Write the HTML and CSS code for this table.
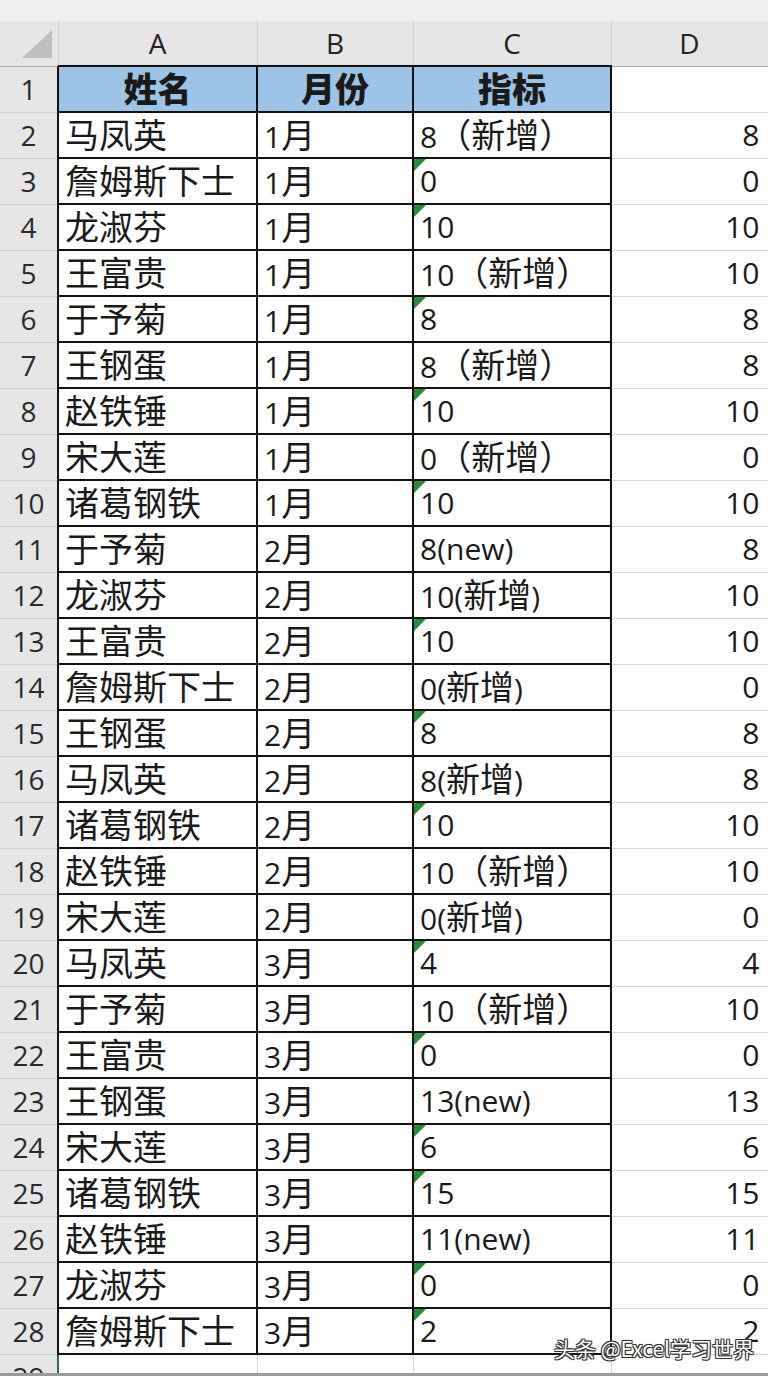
FILE: index.html
```html
<!DOCTYPE html>
<html lang="zh-CN">
<head>
<meta charset="utf-8">
<link rel="stylesheet" href="styles.css">
</head>
<body>
<div class="sheet">
  <div class="topstrip"></div>
  <table class="grid">
    <colgroup>
      <col class="c-rh"><col class="c-a"><col class="c-b"><col class="c-c"><col class="c-d">
    </colgroup>
    <tr class="colhead">
      <th class="corner"><span class="tri"></span></th>
      <th>A</th><th>B</th><th>C</th><th>D</th>
    </tr>
    <tr><td class="rh">1</td><td class="t hd"><span class="zh">姓名</span></td><td class="t hd"><span class="zh">月份</span></td><td class="t hd"><span class="zh">指标</span></td><td class="d"></td></tr>
    <tr><td class="rh">2</td><td class="t"><span class="zh">马凤英</span></td><td class="t">1<span class="zh">月</span></td><td class="t">8<span class="zh">（新增）</span></td><td class="d">8</td></tr>
    <tr><td class="rh">3</td><td class="t"><span class="zh">詹姆斯下士</span></td><td class="t">1<span class="zh">月</span></td><td class="t err">0</td><td class="d">0</td></tr>
    <tr><td class="rh">4</td><td class="t"><span class="zh">龙淑芬</span></td><td class="t">1<span class="zh">月</span></td><td class="t err">10</td><td class="d">10</td></tr>
    <tr><td class="rh">5</td><td class="t"><span class="zh">王富贵</span></td><td class="t">1<span class="zh">月</span></td><td class="t">10<span class="zh">（新增）</span></td><td class="d">10</td></tr>
    <tr><td class="rh">6</td><td class="t"><span class="zh">于予菊</span></td><td class="t">1<span class="zh">月</span></td><td class="t err">8</td><td class="d">8</td></tr>
    <tr><td class="rh">7</td><td class="t"><span class="zh">王钢蛋</span></td><td class="t">1<span class="zh">月</span></td><td class="t">8<span class="zh">（新增）</span></td><td class="d">8</td></tr>
    <tr><td class="rh">8</td><td class="t"><span class="zh">赵铁锤</span></td><td class="t">1<span class="zh">月</span></td><td class="t err">10</td><td class="d">10</td></tr>
    <tr><td class="rh">9</td><td class="t"><span class="zh">宋大莲</span></td><td class="t">1<span class="zh">月</span></td><td class="t">0<span class="zh">（新增）</span></td><td class="d">0</td></tr>
    <tr><td class="rh">10</td><td class="t"><span class="zh">诸葛钢铁</span></td><td class="t">1<span class="zh">月</span></td><td class="t err">10</td><td class="d">10</td></tr>
    <tr><td class="rh">11</td><td class="t"><span class="zh">于予菊</span></td><td class="t">2<span class="zh">月</span></td><td class="t">8(new)</td><td class="d">8</td></tr>
    <tr><td class="rh">12</td><td class="t"><span class="zh">龙淑芬</span></td><td class="t">2<span class="zh">月</span></td><td class="t">10(<span class="zh">新增</span>)</td><td class="d">10</td></tr>
    <tr><td class="rh">13</td><td class="t"><span class="zh">王富贵</span></td><td class="t">2<span class="zh">月</span></td><td class="t err">10</td><td class="d">10</td></tr>
    <tr><td class="rh">14</td><td class="t"><span class="zh">詹姆斯下士</span></td><td class="t">2<span class="zh">月</span></td><td class="t">0(<span class="zh">新增</span>)</td><td class="d">0</td></tr>
    <tr><td class="rh">15</td><td class="t"><span class="zh">王钢蛋</span></td><td class="t">2<span class="zh">月</span></td><td class="t err">8</td><td class="d">8</td></tr>
    <tr><td class="rh">16</td><td class="t"><span class="zh">马凤英</span></td><td class="t">2<span class="zh">月</span></td><td class="t">8(<span class="zh">新增</span>)</td><td class="d">8</td></tr>
    <tr><td class="rh">17</td><td class="t"><span class="zh">诸葛钢铁</span></td><td class="t">2<span class="zh">月</span></td><td class="t err">10</td><td class="d">10</td></tr>
    <tr><td class="rh">18</td><td class="t"><span class="zh">赵铁锤</span></td><td class="t">2<span class="zh">月</span></td><td class="t">10<span class="zh">（新增）</span></td><td class="d">10</td></tr>
    <tr><td class="rh">19</td><td class="t"><span class="zh">宋大莲</span></td><td class="t">2<span class="zh">月</span></td><td class="t">0(<span class="zh">新增</span>)</td><td class="d">0</td></tr>
    <tr><td class="rh">20</td><td class="t"><span class="zh">马凤英</span></td><td class="t">3<span class="zh">月</span></td><td class="t err">4</td><td class="d">4</td></tr>
    <tr><td class="rh">21</td><td class="t"><span class="zh">于予菊</span></td><td class="t">3<span class="zh">月</span></td><td class="t">10<span class="zh">（新增）</span></td><td class="d">10</td></tr>
    <tr><td class="rh">22</td><td class="t"><span class="zh">王富贵</span></td><td class="t">3<span class="zh">月</span></td><td class="t err">0</td><td class="d">0</td></tr>
    <tr><td class="rh">23</td><td class="t"><span class="zh">王钢蛋</span></td><td class="t">3<span class="zh">月</span></td><td class="t">13(new)</td><td class="d">13</td></tr>
    <tr><td class="rh">24</td><td class="t"><span class="zh">宋大莲</span></td><td class="t">3<span class="zh">月</span></td><td class="t err">6</td><td class="d">6</td></tr>
    <tr><td class="rh">25</td><td class="t"><span class="zh">诸葛钢铁</span></td><td class="t">3<span class="zh">月</span></td><td class="t err">15</td><td class="d">15</td></tr>
    <tr><td class="rh">26</td><td class="t"><span class="zh">赵铁锤</span></td><td class="t">3<span class="zh">月</span></td><td class="t">11(new)</td><td class="d">11</td></tr>
    <tr><td class="rh">27</td><td class="t"><span class="zh">龙淑芬</span></td><td class="t">3<span class="zh">月</span></td><td class="t err">0</td><td class="d">0</td></tr>
    <tr><td class="rh">28</td><td class="t"><span class="zh">詹姆斯下士</span></td><td class="t">3<span class="zh">月</span></td><td class="t err">2</td><td class="d">2</td></tr>
    <tr><td class="rh">29</td><td class="d sel"></td><td class="d"></td><td class="d"></td><td class="d"></td></tr>
  </table>
  <div class="watermark">头条 @Excel学习世界</div>
</div>
</body>
</html>
```

FILE: styles.css
```css
html, body {
  margin: 0;
  padding: 0;
  background: #ffffff;
}
body {
  width: 768px;
  height: 1376px;
  overflow: hidden;
  font-family: "Open Sans", "Noto Sans CJK SC", sans-serif;
  color: #1a1a1a;
}
.sheet {
  position: relative;
  width: 768px;
  height: 1376px;
  overflow: hidden;
  border-bottom: 3px solid #9a9a9a;
  box-sizing: border-box;
}
.topstrip {
  height: 21px;
  background: #efefef;
}
.grid {
  table-layout: fixed;
  width: 768px;
  border-collapse: collapse;
  border-spacing: 0;
}
.c-rh { width: 58px; }
.c-a { width: 199px; }
.c-b { width: 156px; }
.c-c { width: 198px; }
.c-d { width: 157px; }

.grid tr { height: 44px; }
.grid th, .grid td {
  padding: 0;
  height: 44px;
  white-space: nowrap;
}
.colhead th {
  background: #e6e6e6;
  font-weight: normal;
  font-size: 28px;
  color: #222;
  text-align: center;
  border-left: 1px solid #cfcfcf;
  border-right: 1px solid #cfcfcf;
  border-bottom: 1px solid #a8a8a8;
  line-height: 40px;
}
.colhead th.corner {
  position: relative;
  border-left: none;
}
.tri {
  position: absolute;
  right: 6px;
  bottom: 8px;
  width: 0;
  height: 0;
  border-left: 30px solid transparent;
  border-bottom: 28px solid #bfbfbf;
}
.rh {
  background: #e6e6e6;
  text-align: center;
  font-size: 28px;
  color: #2a2a2a;
  border-right: 1px solid #b8b8b8;
  border-bottom: 1px solid #d2d2d2;
  line-height: 40px;
}
.t {
  border: 2px solid #111;
  font-size: 30px;
  padding-left: 6px !important;
  vertical-align: middle;
  position: relative;
  line-height: 40px;
}
.zh {
  font-family: "Noto Sans CJK SC", sans-serif;
  font-size: 34px;
  line-height: 40px;
}
.hd {
  background: #9dc3e6;
  text-align: center;
  font-weight: bold;
  padding-left: 0 !important;
}
.hd .zh { font-weight: 900; }
.d {
  border: 1px solid #d9d9d9;
  font-size: 30px;
  text-align: right;
  padding-right: 8px !important;
  line-height: 40px;
}
.sel {
  border-left: 2px solid #1f7a3c;
}
.err::before {
  content: "";
  position: absolute;
  left: 0;
  top: 0;
  width: 0;
  height: 0;
  border-top: 12px solid #2b8a3e;
  border-right: 12px solid transparent;
}
.watermark {
  position: absolute;
  left: 554px;
  top: 1333px;
  font-family: "Noto Sans CJK SC", sans-serif;
  font-size: 21px;
  color: #ffffff;
  text-shadow: 1px 1px 0 #333, -1px -1px 0 #333, 1px -1px 0 #333, -1px 1px 0 #333, 0 0 2px #222;
}
```
